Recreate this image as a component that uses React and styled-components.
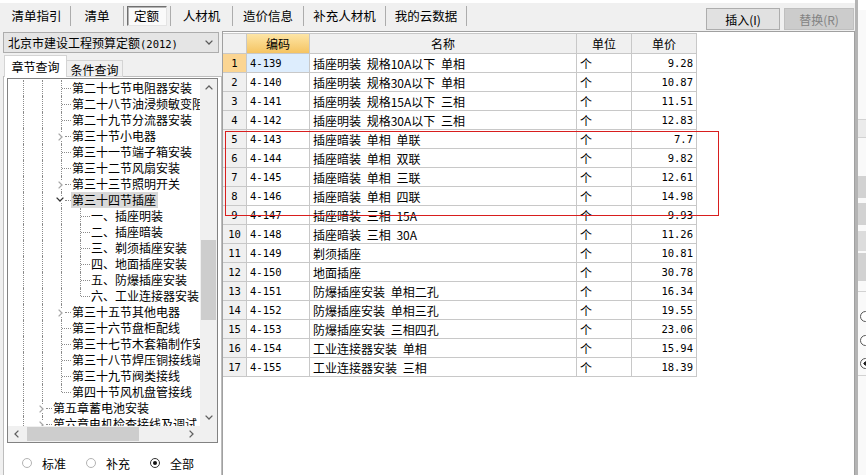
import React from 'react';
import styled, { createGlobalStyle } from 'styled-components';

const GlobalStyle = createGlobalStyle`
  html, body {
    margin: 0;
    padding: 0;
    background: #ffffff;
    overflow: hidden;
  }
  body {
    font-family: "Noto Sans CJK SC", "Noto Sans", sans-serif;
    color: #000;
  }
`;

const CJK = '"Noto Sans CJK SC", "Noto Sans", sans-serif';
const MONO = '"DejaVu Sans Mono", "Liberation Mono", "Noto Sans CJK SC", monospace';

const Page = styled.div`
  display: flex;
  width: 866px;
  height: 475px;
  overflow: hidden;
`;

const Window = styled.div`
  width: 855px;
  height: 475px;
  box-sizing: border-box;
  border-top: 3px solid #ffffff;
  background: #f0f0f0;
  display: flex;
  flex-direction: column;
`;

/* ---------- toolbar ---------- */

const Toolbar = styled.div`
  height: 28px;
  flex: none;
  display: flex;
  justify-content: space-between;
  box-sizing: border-box;
  padding-top: 3px;
`;

const ToolTabs = styled.div`
  display: flex;
  height: 20px;
  padding-left: 3px;
`;

const ToolTab = styled.div`
  width: ${p => p.$w}px;
  height: 20px;
  box-sizing: border-box;
  border-right: 1px solid #acacac;
  display: flex;
  align-items: center;
  justify-content: center;
  font-size: 12.5px;
  line-height: 20px;
  white-space: nowrap;
`;

const PressedBox = styled.div`
  width: 40px;
  height: 20px;
  box-sizing: border-box;
  border: 1px solid;
  border-color: #707070 #e4e4e4 #e4e4e4 #707070;
  box-shadow: inset 1px 1px 0 #b4b4b4;
  background: #fafafa;
  display: flex;
  align-items: center;
  justify-content: center;
  margin-right: 1px;
`;

const ToolButtons = styled.div`
  display: flex;
  gap: 4px;
  margin-top: 2px;
  padding-right: 1px;
`;

const ActionButton = styled.div`
  width: ${p => p.$w}px;
  height: 22px;
  box-sizing: border-box;
  border: 1px solid ${p => (p.$disabled ? '#bfbfbf' : '#adadad')};
  background: ${p => (p.$disabled ? '#cccccc' : '#e1e1e1')};
  color: ${p => (p.$disabled ? '#838383' : '#000')};
  display: flex;
  align-items: center;
  justify-content: center;
  font-size: 12px;
`;

/* ---------- body ---------- */

const Body = styled.div`
  flex: 1;
  min-height: 0;
  display: flex;
`;

const LeftPanel = styled.div`
  width: 222px;
  flex: none;
  box-sizing: border-box;
  padding: 1px 0 0 3px;
  display: flex;
  flex-direction: column;
`;

const LibrarySelect = styled.div`
  width: 216px;
  height: 21px;
  box-sizing: border-box;
  border: 1px solid #adadad;
  background: #e5e5e5;
  display: flex;
  align-items: center;
  justify-content: space-between;
  padding: 0 5px 0 4px;
  font-size: 12px;
  white-space: nowrap;
`;

const AsciiRun = styled.span`
  font-family: ${MONO};
  font-size: 10.5px;
`;

const TabStrip = styled.div`
  display: flex;
  align-items: flex-end;
  height: 22px;
  margin-top: 2px;
  margin-bottom: -1px;
  padding-left: 1px;
  position: relative;
  z-index: 1;
`;

const Tab = styled.div`
  width: ${p => p.$w}px;
  height: ${p => (p.$active ? 22 : 17)}px;
  box-sizing: border-box;
  border: 1px solid #d4d4d4;
  border-bottom: ${p => (p.$active ? 'none' : '1px solid #d4d4d4')};
  border-left: ${p => (p.$active ? '1px solid #d4d4d4' : 'none')};
  background: ${p => (p.$active ? '#ffffff' : '#f0f0f0')};
  display: flex;
  align-items: center;
  justify-content: center;
  font-size: 12px;
  padding-top: ${p => (p.$active ? 0 : 1)}px;
`;

const TabBody = styled.div`
  flex: 1;
  width: 219px;
  box-sizing: border-box;
  border: 1px solid #bdbdbd;
  border-bottom: none;
  background: #ffffff;
  padding: 1px 0 0 3px;
  display: flex;
  flex-direction: column;
`;

const TreeBox = styled.div`
  width: 211px;
  height: 365px;
  box-sizing: border-box;
  border: 1px solid #828282;
  display: flex;
  flex-direction: column;
  overflow: hidden;
`;

const TreeMain = styled.div`
  flex: 1;
  min-height: 0;
  display: flex;
`;

const TreeViewport = styled.div`
  flex: 1;
  min-width: 0;
  overflow: hidden;
  padding: 1px 0 0 6px;
  background: #fff;
`;

const TreeRow = styled.div`
  display: flex;
  height: 16px;
  white-space: nowrap;
`;

const Guide = styled.div`
  width: 19px;
  flex: none;
  position: relative;
  &::before {
    content: '';
    position: absolute;
    left: 9px;
    top: 0;
    bottom: 0;
    border-left: 1px dotted #8c8c8c;
  }
`;

const Connector = styled.div`
  width: 19px;
  flex: none;
  position: relative;
  &::before {
    content: '';
    position: absolute;
    left: 9px;
    top: 0;
    height: ${p => (p.$last ? '8px' : '16px')};
    border-left: 1px dotted #8c8c8c;
  }
  &::after {
    content: '';
    position: absolute;
    left: ${p => (p.$chev ? 13 : 10)}px;
    right: 0;
    top: 8px;
    border-top: 1px dotted #8c8c8c;
  }
`;

const ChevronSlot = styled.span`
  position: absolute;
  left: ${p => p.$left}px;
  top: ${p => p.$top}px;
  width: ${p => p.$w}px;
  height: ${p => p.$h}px;
  background: #fff;
  display: flex;
  align-items: center;
  justify-content: center;
  z-index: 1;
`;

const NodeLabel = styled.span`
  font-size: 12px;
  line-height: 16px;
  height: 16px;
  padding: 0 2px 0 1px;
  background: ${p => (p.$selected ? '#d9d9d9' : 'transparent')};
`;

const VScroll = styled.div`
  width: 17px;
  flex: none;
  background: #f0f0f0;
  display: flex;
  flex-direction: column;
`;

const ArrowButton = styled.div`
  width: 17px;
  height: ${p => p.$h || 17}px;
  flex: none;
  display: flex;
  align-items: center;
  justify-content: center;
`;

const VTrack = styled.div`
  flex: 1;
  min-height: 0;
`;

const VThumb = styled.div`
  margin: ${p => p.$offset}px 1px 0 1px;
  height: ${p => p.$size}px;
  background: #cdcdcd;
`;

const HScrollRow = styled.div`
  height: 16px;
  flex: none;
  display: flex;
  background: #f0f0f0;
`;

const HTrack = styled.div`
  flex: 1;
  display: flex;
  align-items: center;
`;

const HThumb = styled.div`
  margin-left: ${p => p.$offset}px;
  width: ${p => p.$size}px;
  height: 14px;
  background: #cdcdcd;
`;

const ScrollCorner = styled.div`
  width: 17px;
  background: #f0f0f0;
`;

const RadioRow = styled.div`
  display: flex;
  align-items: center;
  height: 16px;
  margin-top: 12px;
  padding-left: 15px;
  gap: 20px;
`;

const RadioItem = styled.label`
  display: flex;
  align-items: center;
  gap: 10px;
  font-size: 12px;
`;

const RadioDot = styled.span`
  width: 10px;
  height: 10px;
  border-radius: 50%;
  box-sizing: border-box;
  border: 1px solid ${p => (p.$checked ? '#333333' : '#b3b3b3')};
  background: #fff;
  display: inline-flex;
  align-items: center;
  justify-content: center;
  &::after {
    content: '';
    width: 4px;
    height: 4px;
    border-radius: 50%;
    background: ${p => (p.$checked ? '#111111' : 'transparent')};
  }
`;

/* ---------- table ---------- */

const TablePanel = styled.div`
  flex: 1;
  position: relative;
  background: #ffffff;
  border-left: 1px solid #a0a0a0;
  border-top: 1px solid #a0a0a0;
  border-right: 1px solid #a0a0a0;
  padding-top: 1px;
`;

const Grid = styled.div`
  width: 474px;
  border-top: 1px solid #c8c8c8;
`;

const GridRow = styled.div`
  display: grid;
  grid-template-columns: 24px 63px 267px 55px 65px;
  height: ${p => (p.$header ? 20 : 19)}px;
`;

const Cell = styled.div`
  box-sizing: border-box;
  border-right: 1px solid #c8c8c8;
  border-bottom: 1px solid #c8c8c8;
  overflow: hidden;
  white-space: nowrap;
  display: flex;
  align-items: center;
`;

const HeadCell = styled(Cell)`
  justify-content: center;
  font-size: 12px;
  font-family: ${CJK};
  background: ${p => (p.$accent ? 'linear-gradient(#fde5a6, #f5c462)' : '#f0f0f0')};
`;

const NumCell = styled(Cell)`
  justify-content: center;
  font-family: ${MONO};
  font-size: 10.5px;
  background: ${p => (p.$current ? '#fbd592' : '#f0f0f0')};
`;

const CodeCell = styled(Cell)`
  padding-left: 3px;
  font-family: ${MONO};
  font-size: 10.5px;
  background: ${p => (p.$current ? '#ddedfd' : '#ffffff')};
`;

const TextCell = styled(Cell)`
  padding-left: 3px;
  font-family: ${CJK};
  font-size: 12px;
  word-spacing: 3px;
`;

const PriceCell = styled(Cell)`
  justify-content: flex-end;
  padding-right: 3px;
  font-family: ${MONO};
  font-size: 10.5px;
`;

const Annotation = styled.div`
  position: absolute;
  left: 2px;
  top: 99px;
  width: 494px;
  height: 85px;
  box-sizing: border-box;
  border: 1px solid #d81e1e;
  pointer-events: none;
`;

/* ---------- background window edge ---------- */

const RightStrip = styled.div`
  width: 11px;
  flex: none;
  box-sizing: border-box;
  border-left: 3px solid #b4b4b4;
  background: #f9f9f9;
  display: flex;
  flex-direction: column;
  overflow: hidden;
`;

const StripBand = styled.div`
  height: ${p => p.$h}px;
  flex: none;
  margin-top: ${p => p.$gap || 0}px;
  background: ${p => p.$bg || 'transparent'};
  border-top: ${p => (p.$line ? '1px solid #d2d2d2' : 'none')};
  border-bottom: ${p => (p.$lineBottom ? '1px solid #d2d2d2' : 'none')};
`;

const StripRadio = styled.div`
  width: 11px;
  height: 11px;
  flex: none;
  margin: ${p => p.$gap}px 0 0 2px;
  border-radius: 50%;
  box-sizing: border-box;
  border: 1px solid #555;
  background: ${p => (p.$checked ? 'radial-gradient(circle, #222 30%, #fff 34%)' : '#fff')};
`;

/* ---------- icons ---------- */

const ChevronRight = ({ color = '#a6a6a6' }) => (
  <svg width="5" height="8" viewBox="0 0 5 8">
    <path d="M0.6 0.6 L4 4 L0.6 7.4" stroke={color} strokeWidth="1.3" fill="none" />
  </svg>
);

const ChevronDown = ({ color = '#333333', w = 8, h = 5 }) => (
  <svg width={w} height={h} viewBox="0 0 8 5">
    <path d="M0.6 0.6 L4 4 L7.4 0.6" stroke={color} strokeWidth="1.3" fill="none" />
  </svg>
);

const ChevronUp = ({ color = '#606060' }) => (
  <svg width="8" height="5" viewBox="0 0 8 5">
    <path d="M0.6 4.4 L4 1 L7.4 4.4" stroke={color} strokeWidth="1.3" fill="none" />
  </svg>
);

const ChevronLeft = ({ color = '#606060' }) => (
  <svg width="5" height="8" viewBox="0 0 5 8">
    <path d="M4.4 0.6 L1 4 L4.4 7.4" stroke={color} strokeWidth="1.3" fill="none" />
  </svg>
);

/* ---------- data ---------- */

const toolTabs = [
  { label: '清单指引', w: 68 },
  { label: '清单', w: 53 },
  { label: '定额', w: 47, pressed: true },
  { label: '人材机', w: 62 },
  { label: '造价信息', w: 71 },
  { label: '补充人材机', w: 82 },
  { label: '我的云数据', w: 81 },
];

const treeRows = [
  { lvl: 3, text: '第二十七节电阻器安装' },
  { lvl: 3, text: '第二十八节油浸频敏变阻器安装' },
  { lvl: 3, text: '第二十九节分流器安装' },
  { lvl: 3, text: '第三十节小电器', chev: 'right' },
  { lvl: 3, text: '第三十一节端子箱安装' },
  { lvl: 3, text: '第三十二节风扇安装' },
  { lvl: 3, text: '第三十三节照明开关', chev: 'right' },
  { lvl: 3, text: '第三十四节插座', chev: 'down', selected: true },
  { lvl: 4, text: '一、插座明装' },
  { lvl: 4, text: '二、插座暗装' },
  { lvl: 4, text: '三、剃须插座安装' },
  { lvl: 4, text: '四、地面插座安装' },
  { lvl: 4, text: '五、防爆插座安装' },
  { lvl: 4, text: '六、工业连接器安装', last: true },
  { lvl: 3, text: '第三十五节其他电器', chev: 'right' },
  { lvl: 3, text: '第三十六节盘柜配线' },
  { lvl: 3, text: '第三十七节木套箱制作安装' },
  { lvl: 3, text: '第三十八节焊压铜接线端子' },
  { lvl: 3, text: '第三十九节阀类接线' },
  { lvl: 3, text: '第四十节风机盘管接线', last: true },
  { lvl: 2, text: '第五章蓄电池安装', chev: 'right' },
  { lvl: 2, text: '第六章电机检查接线及调试', chev: 'right' },
];

const quotas = [
  ['4-139', '插座明装 规格10A以下 单相', '9.28'],
  ['4-140', '插座明装 规格30A以下 单相', '10.87'],
  ['4-141', '插座明装 规格15A以下 三相', '11.51'],
  ['4-142', '插座明装 规格30A以下 三相', '12.83'],
  ['4-143', '插座暗装 单相 单联', '7.7'],
  ['4-144', '插座暗装 单相 双联', '9.82'],
  ['4-145', '插座暗装 单相 三联', '12.61'],
  ['4-146', '插座暗装 单相 四联', '14.98'],
  ['4-147', '插座暗装 三相 15A', '9.93'],
  ['4-148', '插座暗装 三相 30A', '11.26'],
  ['4-149', '剃须插座', '10.81'],
  ['4-150', '地面插座', '30.78'],
  ['4-151', '防爆插座安装 单相二孔', '16.34'],
  ['4-152', '防爆插座安装 单相三孔', '19.55'],
  ['4-153', '防爆插座安装 三相四孔', '23.06'],
  ['4-154', '工业连接器安装 单相', '15.94'],
  ['4-155', '工业连接器安装 三相', '18.39'],
];

const TreeItem = ({ row }) => (
  <TreeRow>
    {Array.from({ length: row.lvl - 1 }).map((_, i) => (
      <Guide key={i} />
    ))}
    <Connector $last={row.last} $chev={!!row.chev}>
      {row.chev === 'right' && (
        <ChevronSlot $left={4} $top={4} $w={8} $h={9}>
          <ChevronRight />
        </ChevronSlot>
      )}
      {row.chev === 'down' && (
        <ChevronSlot $left={3} $top={4} $w={10} $h={7}>
          <ChevronDown />
        </ChevronSlot>
      )}
    </Connector>
    <NodeLabel $selected={row.selected}>{row.text}</NodeLabel>
  </TreeRow>
);

const App = () => (
  <>
    <GlobalStyle />
    <Page>
      <Window>
        <Toolbar>
          <ToolTabs>
            {toolTabs.map(t => (
              <ToolTab key={t.label} $w={t.w}>
                {t.pressed ? <PressedBox>{t.label}</PressedBox> : t.label}
              </ToolTab>
            ))}
          </ToolTabs>
          <ToolButtons>
            <ActionButton $w={74}>插入(I)</ActionButton>
            <ActionButton $w={70} $disabled>替换(R)</ActionButton>
          </ToolButtons>
        </Toolbar>

        <Body>
          <LeftPanel>
            <LibrarySelect>
              <span>
                北京市建设工程预算定额<AsciiRun>(2012)</AsciiRun>
              </span>
              <ChevronDown color="#5a5a5a" w={8} h={5} />
            </LibrarySelect>
            <TabStrip>
              <Tab $w={63} $active>章节查询</Tab>
              <Tab $w={56}>条件查询</Tab>
            </TabStrip>
            <TabBody>
              <TreeBox>
                <TreeMain>
                  <TreeViewport>
                    {treeRows.map(r => (
                      <TreeItem key={r.text} row={r} />
                    ))}
                  </TreeViewport>
                  <VScroll>
                    <ArrowButton>
                      <ChevronUp />
                    </ArrowButton>
                    <VTrack>
                      <VThumb $offset={144} $size={80} />
                    </VTrack>
                    <ArrowButton>
                      <ChevronDown color="#606060" />
                    </ArrowButton>
                  </VScroll>
                </TreeMain>
                <HScrollRow>
                  <ArrowButton $h={16}>
                    <ChevronLeft />
                  </ArrowButton>
                  <HTrack>
                    <HThumb $offset={2} $size={112} />
                  </HTrack>
                  <ArrowButton $h={16}>
                    <ChevronRight color="#606060" />
                  </ArrowButton>
                  <ScrollCorner />
                </HScrollRow>
              </TreeBox>
              <RadioRow>
                <RadioItem>
                  <RadioDot />
                  标准
                </RadioItem>
                <RadioItem>
                  <RadioDot />
                  补充
                </RadioItem>
                <RadioItem>
                  <RadioDot $checked />
                  全部
                </RadioItem>
              </RadioRow>
            </TabBody>
          </LeftPanel>

          <TablePanel>
            <Grid>
              <GridRow $header>
                <HeadCell />
                <HeadCell $accent>编码</HeadCell>
                <HeadCell>名称</HeadCell>
                <HeadCell>单位</HeadCell>
                <HeadCell>单价</HeadCell>
              </GridRow>
              {quotas.map(([code, name, price], i) => (
                <GridRow key={code}>
                  <NumCell $current={i === 0}>{i + 1}</NumCell>
                  <CodeCell $current={i === 0}>{code}</CodeCell>
                  <TextCell>{name}</TextCell>
                  <TextCell>个</TextCell>
                  <PriceCell>{price}</PriceCell>
                </GridRow>
              ))}
            </Grid>
            <Annotation />
          </TablePanel>
        </Body>
      </Window>

      <RightStrip>
        <StripBand $h={10} $bg="#ffffff" />
        <StripBand $h={109} />
        <StripBand $h={17} $bg="#ebebeb" $line $lineBottom />
        <StripBand $h={38} />
        <StripBand $h={22} $bg="#d2d2d2" />
        <StripBand $h={22} $gap={5} $bg="#d2d2d2" />
        <StripBand $h={20} $gap={6} $bg="#dcdcdc" />
        <StripBand $h={28} $gap={2} $bg="#d2d2d2" />
        <StripBand $h={10} $lineBottom />
        <StripRadio $gap={19} />
        <StripRadio $gap={13} />
        <StripRadio $gap={12} $checked />
        <StripBand $h={6} $lineBottom />
      </RightStrip>
    </Page>
  </>
);

export default App;
